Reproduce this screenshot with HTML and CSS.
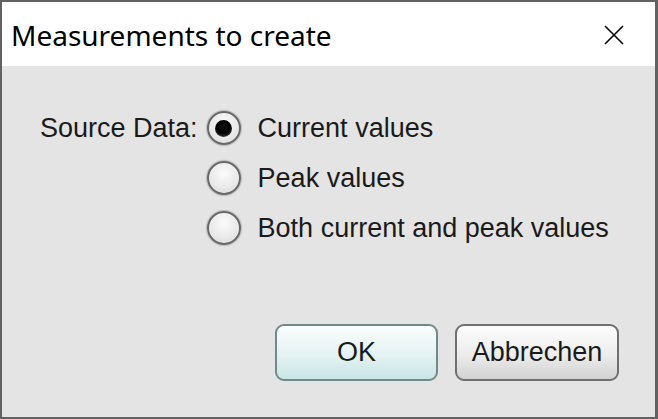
FILE: index.html
```html
<!DOCTYPE html>
<html lang="en">

<head>
  <meta charset="UTF-8">
  <title>Measurements to create</title>
  <link rel="stylesheet" href="styles.css">
</head>

<body>
  <div class="window">
    <div class="titlebar">
      <span class="title">Measurements to create</span>
      <svg class="close" width="20" height="20" viewBox="0 0 20 20">
        <path d="M1 1 L19 19 M19 1 L1 19" stroke="#000" stroke-width="1.6" fill="none" />
      </svg>
    </div>

    <div class="content">
      <div class="options">
        <span class="label">Source Data:</span>
        <div class="radios">
          <label class="radio"><span class="dot checked"></span>Current values</label>
          <label class="radio"><span class="dot"></span>Peak values</label>
          <label class="radio"><span class="dot"></span>Both current and peak values</label>
        </div>
      </div>

      <div class="buttons">
        <button class="btn btn-ok">OK</button>
        <button class="btn">Abbrechen</button>
      </div>
    </div>
  </div>
</body>

</html>
```

FILE: styles.css
```css
* {
  box-sizing: border-box;
}

body {
  margin: 0;
  background: #fff;
}

.window {
  width: 658px;
  height: 419px;
  border: 2px solid #626262;
  border-right-width: 3px;
  display: flex;
  flex-direction: column;
}

.titlebar {
  height: 64px;
  background: #fff;
  display: flex;
  align-items: center;
  justify-content: space-between;
  padding: 2px 31px 0 9px;
}

.title {
  font-family: "Noto Sans", sans-serif;
  font-size: 28px;
  color: #000;
}

.close {
  display: block;
}

.content {
  flex: 1;
  background: #e4e4e4;
  display: flex;
  flex-direction: column;
  padding: 37px 36px 36px 38px;
  font-family: "Liberation Sans", Arial, sans-serif;
  font-size: 27px;
  color: #1a1a1a;
}

.options {
  display: flex;
  gap: 9px;
}

.label {
  height: 50px;
  line-height: 50px;
}

.radios {
  display: flex;
  flex-direction: column;
}

.radio {
  height: 50px;
  display: flex;
  align-items: center;
  gap: 17px;
}

.dot {
  width: 34px;
  height: 34px;
  border-radius: 50%;
  border: 2px solid #686868;
  background: radial-gradient(circle at 50% 35%, #fbfbfb 0%, #e8e8e8 60%, #d2d2d2 100%);
  box-shadow: 0 0 1px 1px rgba(110, 110, 110, 0.35), inset 0 0 2px rgba(255, 255, 255, 0.9);
  display: flex;
  align-items: center;
  justify-content: center;
}

.dot.checked::after {
  content: "";
  width: 17px;
  height: 17px;
  border-radius: 50%;
  background: radial-gradient(circle at 50% 40%, #111 0%, #000 50%, #444 85%, #777 100%);
}

.buttons {
  margin-top: auto;
  display: flex;
  justify-content: flex-end;
  gap: 17px;
}

.btn {
  width: 164px;
  height: 57px;
  font-family: "Liberation Sans", Arial, sans-serif;
  font-size: 27px;
  color: #1a1a1a;
  border: 2px solid #6f6f6f;
  border-radius: 9px;
  background: linear-gradient(#fdfdfd, #ececec 55%, #d2d2d2);
  padding: 0;
}

.btn-ok {
  width: 163px;
  border-color: #6e8a8a;
  background: linear-gradient(#fbfefe, #e4f2f2 55%, #c9e5e6);
}
```
